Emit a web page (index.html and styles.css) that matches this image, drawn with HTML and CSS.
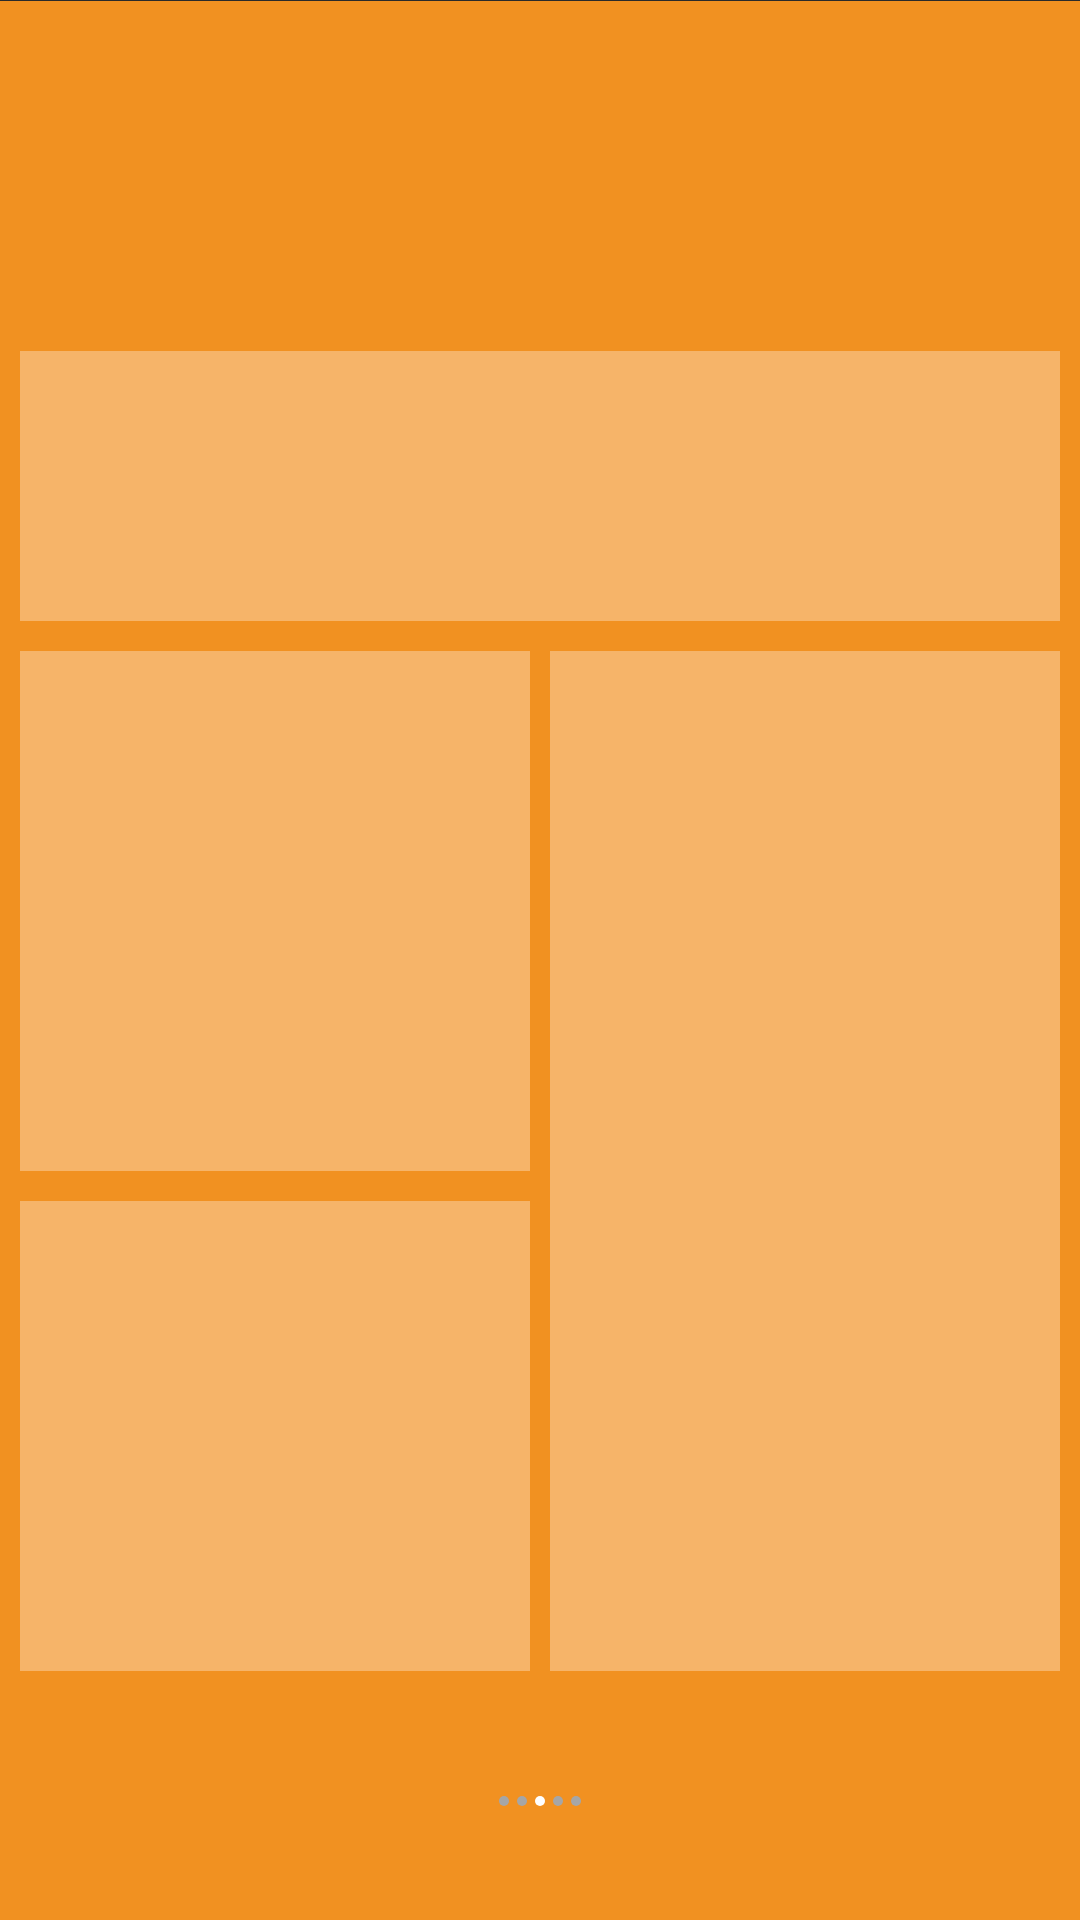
FILE: index.html
```html
<!DOCTYPE html>
<html>
<head>
<meta charset="utf-8">
<link rel="stylesheet" href="styles.css">
</head>
<body>
<div class="screen">
  <div class="header"></div>
  <div class="content">
    <div class="panel banner"></div>
    <div class="grid">
      <div class="col">
        <div class="panel tile-a"></div>
        <div class="panel tile-b"></div>
      </div>
      <div class="col">
        <div class="panel tile-tall"></div>
      </div>
    </div>
  </div>
  <div class="pager">
    <span class="dot"></span>
    <span class="dot"></span>
    <span class="dot active"></span>
    <span class="dot"></span>
    <span class="dot"></span>
  </div>
</div>
</body>
</html>
```
FILE: styles.css
```css
html, body {
  margin: 0;
  padding: 0;
  background: #f19121;
}
.screen {
  width: 1080px;
  height: 1920px;
  box-sizing: border-box;
  border-top: 1px solid #2a2a2a;
  background: #f19121;
  display: flex;
  flex-direction: column;
}
.header {
  height: 350px;
}
.content {
  padding: 0 20px;
  display: flex;
  flex-direction: column;
  gap: 30px;
}
.panel {
  background: #f6b469;
}
.banner {
  height: 270px;
}
.grid {
  display: grid;
  grid-template-columns: 510px 510px;
  column-gap: 20px;
}
.col {
  display: flex;
  flex-direction: column;
  gap: 30px;
}
.tile-a {
  height: 520px;
}
.tile-b {
  height: 470px;
}
.tile-tall {
  height: 1020px;
}
.pager {
  margin-top: 125px;
  display: flex;
  justify-content: center;
  gap: 8px;
}
.dot {
  width: 10px;
  height: 10px;
  border-radius: 50%;
  background: #a6a6a6;
}
.dot.active {
  background: #ffffff;
}
```
